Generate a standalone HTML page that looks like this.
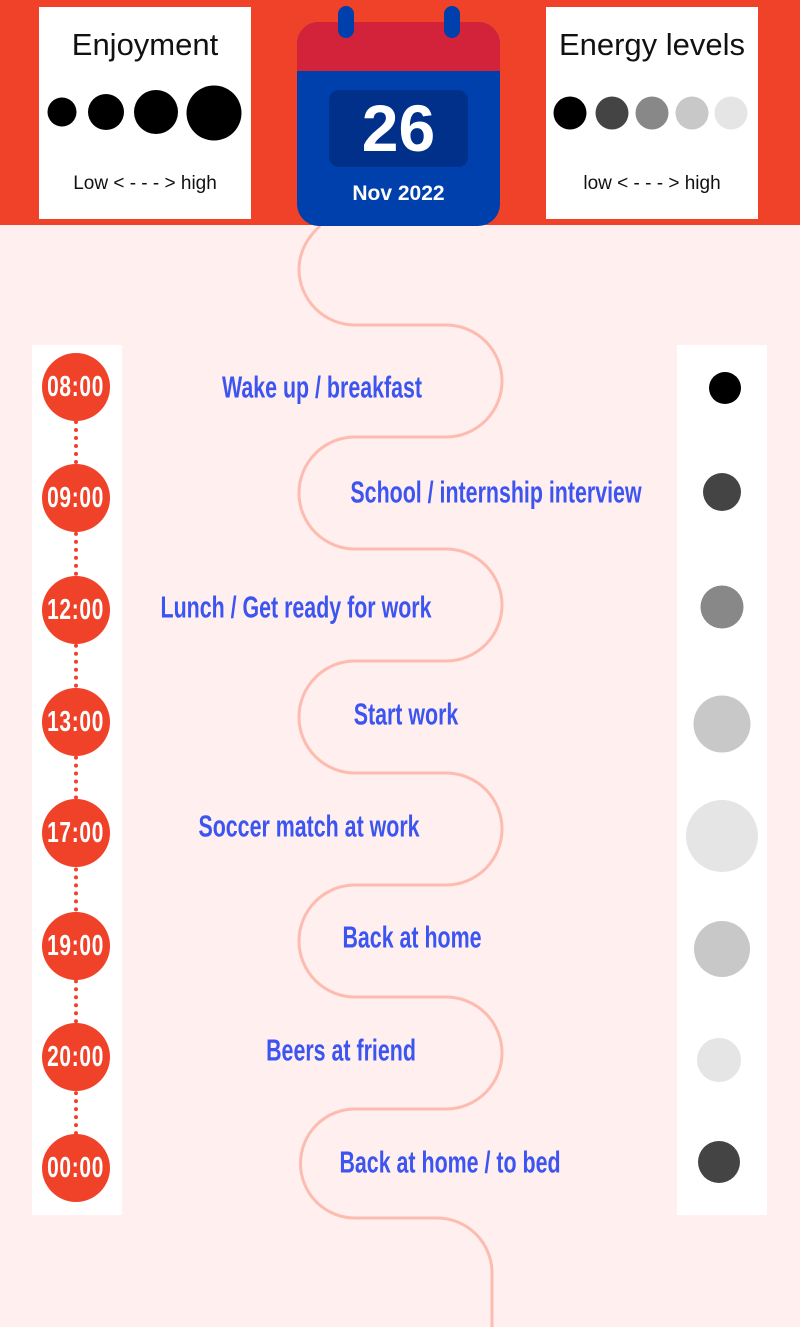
<!DOCTYPE html>
<html><head><meta charset="utf-8"><style>
*{margin:0;padding:0;box-sizing:border-box}
body{width:800px;height:1327px;position:relative;overflow:hidden;background:#FFEFEF;font-family:"Liberation Sans",sans-serif}
.abs{position:absolute}
.lbl{position:absolute;color:#3D55F0;font-family:"Liberation Sans Narrow","Liberation Sans",sans-serif;font-weight:bold;font-size:31px;white-space:nowrap;transform:translate(-50%,-50%) scaleX(0.69);line-height:1}
.t{position:absolute;left:42px;width:68px;height:68px;border-radius:50%;background:#F04228;display:flex;align-items:center;justify-content:center}
.t span{color:#fff;font-family:"Liberation Sans Narrow","Liberation Sans",sans-serif;font-weight:bold;font-size:29px;transform:scaleX(0.72);white-space:nowrap;letter-spacing:1px}
.d{position:absolute;border-radius:50%;transform:translate(-50%,-50%)}
</style></head><body>
<div class="abs" style="left:0;top:0;width:800px;height:225px;background:#F04228"></div>
<div class="abs" style="left:39px;top:7px;width:212px;height:212px;background:#fff"></div>
<div class="abs" style="left:546px;top:7px;width:212px;height:212px;background:#fff"></div>
<div class="abs" style="left:39px;top:27px;width:212px;text-align:center;font-size:31px;color:#111">Enjoyment</div>
<div class="abs" style="left:546px;top:27px;width:212px;text-align:center;font-size:31px;color:#111">Energy levels</div>
<div class="abs" style="left:39px;top:173px;width:212px;text-align:center;font-size:19px;color:#111">Low &lt; - - - &gt; high</div>
<div class="abs" style="left:546px;top:173px;width:212px;text-align:center;font-size:19px;color:#111">low &lt; - - - &gt; high</div>
<div class="d" style="left:62px;top:112px;width:29px;height:29px;background:#000"></div>
<div class="d" style="left:106px;top:112px;width:36px;height:36px;background:#000"></div>
<div class="d" style="left:156px;top:112px;width:44px;height:44px;background:#000"></div>
<div class="d" style="left:214px;top:113px;width:55px;height:55px;background:#000"></div>
<div class="d" style="left:570px;top:113px;width:33px;height:33px;background:#000"></div>
<div class="d" style="left:612px;top:113px;width:33px;height:33px;background:#444"></div>
<div class="d" style="left:652px;top:113px;width:33px;height:33px;background:#888"></div>
<div class="d" style="left:692px;top:113px;width:33px;height:33px;background:#c8c8c8"></div>
<div class="d" style="left:731px;top:113px;width:33px;height:33px;background:#e5e5e5"></div>
<svg class="abs" style="left:0;top:0" width="800" height="1327">
<path d="M320 226 Q299 245 299 270 A56 56 0 0 0 355 325 L446 325 A56 56 0 0 1 446 437 L355 437 A56 56 0 0 0 355 549 L446 549 A56 56 0 0 1 446 661 L355 661 A56 56 0 0 0 355 773 L446 773 A56 56 0 0 1 446 885 L355 885 A56 56 0 0 0 355 997 L446 997 A56 56 0 0 1 446 1109 L355 1109 A54.5 54.5 0 0 0 355 1218 L437 1218 A55 55 0 0 1 492 1273 L492 1327" fill="none" stroke="#FCBCB0" stroke-width="3"/>
</svg>
<div class="abs" style="left:297px;top:22px;width:203px;height:204px;border-radius:22px;background:#0040AD;overflow:hidden"><div style="height:49px;background:#D3233A"></div></div>
<div class="abs" style="left:338px;top:6px;width:16px;height:32px;border-radius:8px;background:#0040AD"></div>
<div class="abs" style="left:444px;top:6px;width:16px;height:32px;border-radius:8px;background:#0040AD"></div>
<div class="abs" style="left:329px;top:90px;width:139px;height:77px;border-radius:10px;background:#00308A;color:#fff;font-weight:bold;font-size:66px;text-align:center;line-height:77px">26</div>
<div class="abs" style="left:297px;top:182px;width:203px;text-align:center;color:#fff;font-weight:bold;font-size:21px">Nov 2022</div>
<div class="abs" style="left:32px;top:345px;width:90px;height:870px;background:#fff"></div>
<div class="abs" style="left:677px;top:345px;width:90px;height:870px;background:#fff"></div>
<div class="abs" style="left:74px;top:420px;width:0;height:740px;border-left:4px dotted #F04228"></div>
<div class="t" style="top:353px"><span>08:00</span></div>
<div class="t" style="top:464px"><span>09:00</span></div>
<div class="t" style="top:576px"><span>12:00</span></div>
<div class="t" style="top:688px"><span>13:00</span></div>
<div class="t" style="top:799px"><span>17:00</span></div>
<div class="t" style="top:912px"><span>19:00</span></div>
<div class="t" style="top:1023px"><span>20:00</span></div>
<div class="t" style="top:1134px"><span>00:00</span></div>
<div class="d" style="left:725px;top:388px;width:32px;height:32px;background:#000"></div>
<div class="d" style="left:722px;top:492px;width:38px;height:38px;background:#444"></div>
<div class="d" style="left:722px;top:607px;width:43px;height:43px;background:#888"></div>
<div class="d" style="left:722px;top:724px;width:57px;height:57px;background:#c8c8c8"></div>
<div class="d" style="left:722px;top:836px;width:72px;height:72px;background:#e5e5e5"></div>
<div class="d" style="left:722px;top:949px;width:56px;height:56px;background:#c8c8c8"></div>
<div class="d" style="left:719px;top:1060px;width:44px;height:44px;background:#e5e5e5"></div>
<div class="d" style="left:719px;top:1162px;width:42px;height:42px;background:#444"></div>
<div class="lbl" style="left:322px;top:387px">Wake up / breakfast</div>
<div class="lbl" style="left:496px;top:492px">School / internship interview</div>
<div class="lbl" style="left:296px;top:607px">Lunch / Get ready for work</div>
<div class="lbl" style="left:406px;top:714px">Start work</div>
<div class="lbl" style="left:309px;top:826px">Soccer match at work</div>
<div class="lbl" style="left:412px;top:937px">Back at home</div>
<div class="lbl" style="left:341px;top:1050px">Beers at friend</div>
<div class="lbl" style="left:450px;top:1162px">Back at home / to bed</div>
</body></html>
